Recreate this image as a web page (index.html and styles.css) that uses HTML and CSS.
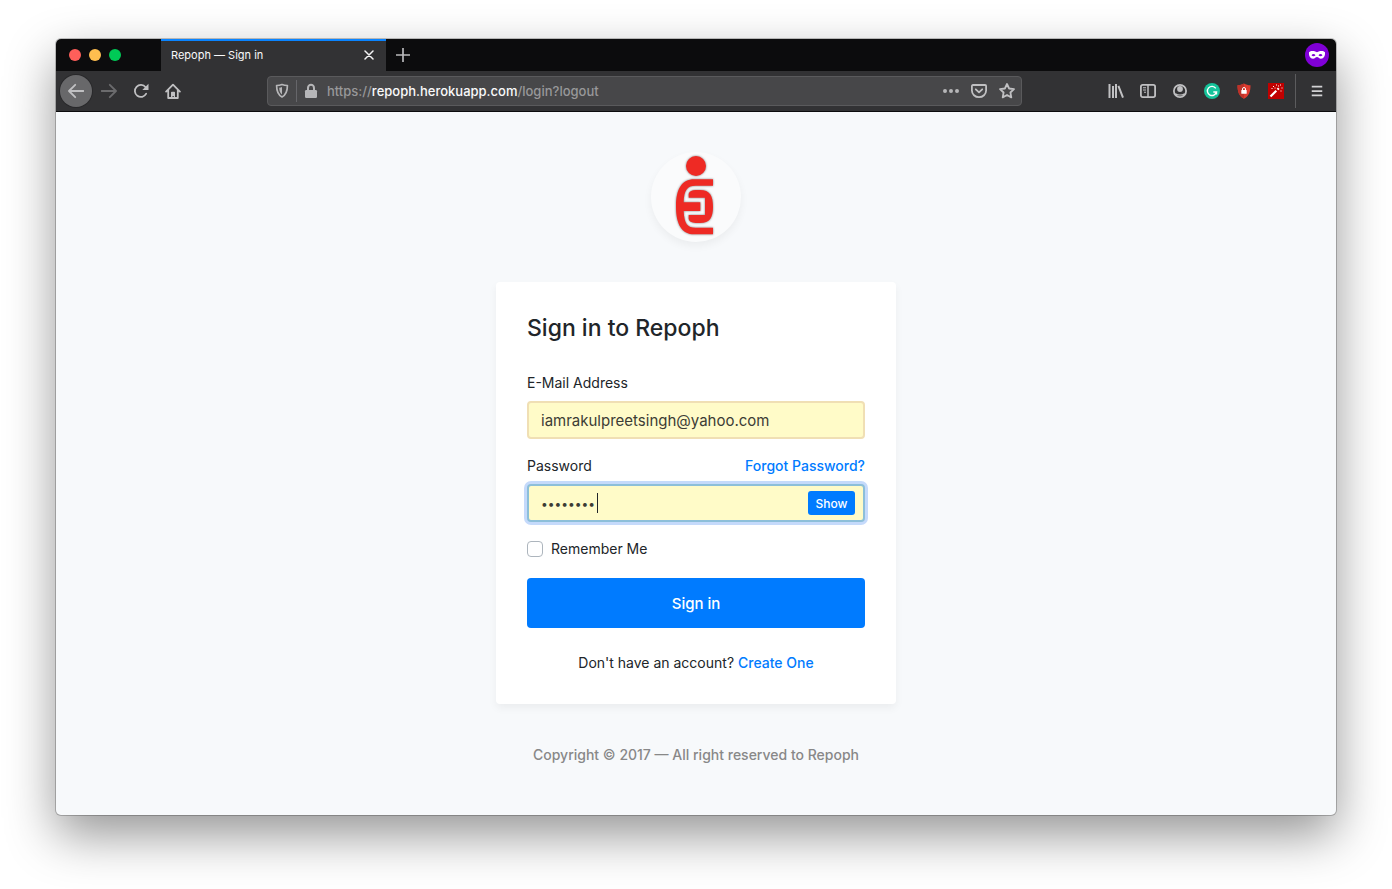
FILE: index.html
```
<!DOCTYPE html>
<html lang="en">
<head>
<meta charset="utf-8">
<title>Repoph — Sign in</title>
<link rel="stylesheet" href="styles.css">
</head>
<body>
<div class="window">
  <header class="tabbar">
    <div class="lights">
      <button class="light close" aria-label="Close window"></button>
      <button class="light minimize" aria-label="Minimize window"></button>
      <button class="light maximize" aria-label="Maximize window"></button>
    </div>
    <div class="tab">
      <span class="tab-title">Repoph — Sign in</span>
      <button class="tab-close" aria-label="Close tab"><svg width="10" height="10" viewBox="0 0 10 10"><path d="M1 1l8 8M9 1L1 9" stroke="#f4f4f5" stroke-width="1.5" stroke-linecap="round"/></svg></button>
    </div>
    <button class="new-tab" aria-label="New tab"><svg width="14" height="14" viewBox="0 0 14 14"><path d="M7 0v14M0 7h14" stroke="#b9b9bb" stroke-width="1.7"/></svg></button>
    <svg class="private" width="24" height="24" viewBox="0 0 24 24"><circle cx="12" cy="12" r="12" fill="#8000d7"/><path d="M4 9.2C6 7.300 9.500 8 12 9.200c2.500-1.200 6-1.900 8 0 .4 3.500-1.200 6.500-4 6.500-2 0-2.700-1.700-4-1.700s-2 1.700-4 1.700c-2.800 0-4.400-3-4-6.500z" fill="#fff"/><path d="M6.500 12.200c1-1.600 3-1.600 4 0-1 1.300-3 1.300-4 0zm7 0c1-1.600 3-1.600 4 0-1 1.300-3 1.300-4 0z" fill="#8000d7"/></svg>
  </header>

  <nav class="toolbar">
    <button class="tool back" aria-label="Back"><svg class="icon" viewBox="0 0 16 16"><path d="M15.500 8H1.200M7.200 1.800L1 8l6.200 6.200" stroke-linecap="round" stroke-linejoin="round"/></svg></button>
    <button class="tool forward" aria-label="Forward"><svg class="icon" viewBox="0 0 16 16"><path d="M.5 8h14.300M8.800 1.800L15 8l-6.200 6.200" stroke-linecap="round" stroke-linejoin="round"/></svg></button>
    <button class="tool" aria-label="Reload"><svg class="icon" viewBox="0 0 16 16"><path d="M13.200 10.700A6 6 0 1 1 12.600 4.200" stroke-linecap="round"/><path d="M15.500 .8v6.200H9.300z" class="solid"/></svg></button>
    <button class="tool" aria-label="Home"><svg class="icon" viewBox="0 0 16 16"><path d="M1.100 8.600L8 1.600l6.900 7M3.200 7v8h9.600V7" stroke-linecap="round" stroke-linejoin="round"/><path d="M6 15V9.500Q6 8.700 6.800 8.700h2.400q.8 0 .8.800V15H8.800v-2H7.500v2z" class="solid"/></svg></button>
    <div class="spacer"></div>
    <div class="urlbar">
      <button class="mini shield" aria-label="Tracking protection"><svg width="14" height="16" viewBox="0 0 14 16"><path d="M7 1.500c2 .8 3.500 1 5.400 1 0 6-1.300 9.300-5.400 11.500C2.900 11.800 1.600 8.500 1.600 2.500c1.900 0 3.400-.2 5.400-1z" fill="none" stroke="#b6b6b8" stroke-width="1.700" stroke-linejoin="round"/><path d="M7 4v7.500C5 10 4.300 8 4.200 4.700 5.400 4.600 6.200 4.400 7 4z" fill="#b6b6b8"/></svg></button>
      <button class="mini lock" aria-label="Site information"><svg width="14" height="16" viewBox="0 0 14 16"><path d="M4 8V5a3 3.200 0 0 1 6 0v3" fill="none" stroke="#b6b6b8" stroke-width="2"/><rect x="1" y="7" width="12" height="8" rx="1.200" fill="#b6b6b8"/></svg></button>
      <div class="address" role="textbox" aria-label="Address" contenteditable="true" spellcheck="false">https://<span class="host">repoph.herokuapp.com</span>/login?logout</div>
      <div class="page-actions">
        <button class="mini" aria-label="Page actions"><svg width="16" height="16" viewBox="0 0 16 16"><path d="M2 6a2 2 0 1 1 0 4 2 2 0 0 1 0-4zm6 0a2 2 0 1 1 0 4 2 2 0 0 1 0-4zm6 0a2 2 0 1 1 0 4 2 2 0 0 1 0-4z" fill="#b6b6b8"/></svg></button>
        <button class="mini" aria-label="Save to Pocket"><svg class="icon" viewBox="0 0 16 16"><path d="M2 2h12q1.100 0 1.100 1.100V7.500a7.100 6.700 0 0 1-14.200 0V3.100Q.9 2 2 2zM4.800 6.300L8 9.400l3.200-3.100" stroke-linecap="round" stroke-linejoin="round"/></svg></button>
        <button class="mini" aria-label="Bookmark page"><svg class="icon" viewBox="0 0 16 16"><path d="M8 1l2.100 4.500 4.900.6-3.600 3.400.9 4.900L8 12l-4.300 2.400.9-4.900L1 6.100l4.900-.6z" stroke-linejoin="round"/></svg></button>
      </div>
    </div>
    <div class="spacer"></div>
    <button class="tool" aria-label="Library"><svg class="icon" viewBox="0 0 16 16"><path d="M1.500 1v14M5 3v12M8 1v14M10.400 2.800L15 14.600" stroke-width="2"/></svg></button>
    <button class="tool" aria-label="Sidebars"><svg class="icon" viewBox="0 0 16 16"><rect x=".9" y="1.900" width="14.200" height="12.200" rx="1.800"/><path d="M8 2v12" stroke-width="1.500"/><path d="M3 4.700h3M3 7h3M4 9.300h2" stroke-width="1.100"/></svg></button>
    <button class="tool" aria-label="Account"><svg class="icon" viewBox="0 0 16 16"><circle cx="8" cy="8" r="6.100"/><circle cx="8" cy="6" r="2.900" class="solid"/><path d="M3.300 10q4.700 3 9.400 0l-.7 2.500H4z" class="solid"/></svg></button>
    <button class="tool" aria-label="Grammarly"><svg width="16" height="16" viewBox="0 0 16 16"><circle cx="8" cy="8" r="8" fill="#15c39a"/><path d="M11.800 5.300A4.600 4.600 0 1 0 12.500 9H9.300M12.500 8.400v3" fill="none" stroke="#fff" stroke-width="1.400"/></svg></button>
    <button class="tool" aria-label="Password shield"><svg width="16" height="16" viewBox="0 0 16 16"><path d="M8 .5c2 1.400 4 1.700 6.500 1.700C14.500 9 13 13 8 15.700 3 13 1.500 9 1.500 2.200 4 2.200 6 1.900 8 .5z" fill="#de3b2f"/><path d="M8 .5v15.200C3 13 1.500 9 1.500 2.200 4 2.200 6 1.900 8 .5z" fill="#bd3229"/><path d="M6.500 7.500V6a1.500 1.500 0 0 1 3 0v1.500" fill="none" stroke="#fff"/><rect x="5.300" y="7" width="5.400" height="3.800" rx=".5" fill="#fff"/></svg></button>
    <button class="tool" aria-label="Magic wand"><svg width="16" height="16" viewBox="0 0 16 16"><path fill="#c00000" d="M0 0h16v16H0z"/><path d="M2.500 13.500L8.300 7.700M9.500 6.500l1.300-1.300" stroke="#fff" stroke-width="2.200"/><path d="M5 3.500h1M8 2h1M12 2h1M13.500 5h1M12.500 8h1M3.500 5.500h1M10 3h1M6.500 5h1" stroke="#fff"/></svg></button>
    <span class="divider"></span>
    <button class="tool" aria-label="Menu"><svg class="icon menu" viewBox="0 0 16 16"><path d="M2 3h12M2 8h12M2 13h12" stroke-width="2"/></svg></button>
  </nav>

  <main class="page">
    <div class="brand">
      <svg class="logo" viewBox="63 36 270 270" role="img" aria-label="Repoph logo"><g fill="#ee2a24"><circle cx="198" cy="78" r="30"/><path d="M249 118H193C155 118 138 148 138 200S155 283 193 283H249V263H197C172 263 163 252 161 213H211V187H161C162 150 172 137 197 137H249Z"/><path d="M176 173V161Q180 150 197 150H210C240 150 249 168 249 200S240 249 210 249H197Q177 248 176 237V225H225V173Z"/></g></svg>
    </div>
    <section class="card">
      <h1 class="title">Sign in to Repoph</h1>
      <form class="form">
        <div class="group">
          <label for="email">E-Mail Address</label>
          <input class="field" id="email" type="email" value="iamrakulpreetsingh@yahoo.com">
        </div>
        <div class="group">
          <div class="label-row">
            <label for="password">Password</label>
            <a class="link" href="#forgot">Forgot Password?</a>
          </div>
          <div class="password">
            <input class="field active" id="password" type="password" value="password">
            <span class="caret"></span>
            <button class="show" type="button">Show</button>
          </div>
        </div>
        <div class="remember">
          <input class="check" id="remember" type="checkbox">
          <label for="remember">Remember Me</label>
        </div>
        <button class="submit" type="button">Sign in</button>
        <p class="signup">Don't have an account? <a class="link" href="#register">Create One</a></p>
      </form>
    </section>
    <footer class="footer">Copyright © 2017 — All right reserved to Repoph</footer>
  </main>
</div>
</body>
</html>
```

FILE: styles.css
```
* { box-sizing: border-box; }
body {
  margin: 0;
  min-height: 100vh;
  padding: 39px 56px 74px;
  display: flex;
  background: #fff;
  color: #212529;
  font: 14px/21px Inter, "Liberation Sans", sans-serif;
}
button {
  padding: 0;
  border: 0;
  background: none;
  font: inherit;
}
svg { display: block; }

.window {
  flex: 1;
  min-width: 0;
  display: flex;
  flex-direction: column;
  border-radius: 5px;
  overflow: hidden;
  background: #f7f9fb;
  box-shadow: 0 0 0 1px rgba(0, 0, 0, .22), 0 20px 50px rgba(0, 0, 0, .42);
}

/* Tab bar */
.tabbar {
  height: 32px;
  display: flex;
  align-items: center;
  background: #0c0c0d;
}
.lights {
  width: 105px;
  padding-left: 13px;
  display: flex;
  gap: 8px;
}
.light {
  width: 12px;
  height: 12px;
  border-radius: 50%;
}
.close { background: #ff5f5a; }
.minimize { background: #ffbe4f; }
.maximize { background: #00ca56; }
.tab {
  width: 225px;
  align-self: stretch;
  padding: 0 12px 0 10px;
  display: flex;
  align-items: center;
  justify-content: space-between;
  background: #323234;
  box-shadow: inset 0 2px #0a84ff;
  color: #f9f9fa;
  font-size: 11px;
}
.new-tab { margin-left: 10px; }
.private { margin: 0 7px 0 auto; }

/* Toolbar */
.toolbar {
  height: 41px;
  padding: 0 3px 0 4px;
  display: flex;
  align-items: center;
  background: #323234;
  border-bottom: 1px solid #0c0c0d;
}
.tool {
  width: 32px;
  height: 32px;
  display: grid;
  place-items: center;
  flex: none;
}
.back {
  border-radius: 50%;
  background: #68686a;
  box-shadow: 0 0 0 1px #29292b;
}
.forward { margin-left: 1px; }
.forward .icon { opacity: .4; }
.icon {
  width: 16px;
  height: 16px;
  fill: none;
  stroke: #c0c0c2;
  stroke-width: 1.8;
}
.icon .solid { fill: #c0c0c2; stroke: none; }
.menu { width: 14px; stroke: #d2d2d4; }
.spacer { flex: 79; }
.urlbar {
  flex: 750;
  height: 30px;
  padding: 0 6px 0 7px;
  display: flex;
  align-items: center;
  background: #474749;
  border: 1px solid #5a5a5c;
  border-radius: 4px;
}
.mini { display: grid; place-items: center; }
.shield {
  height: 22px;
  padding-right: 7px;
  border-right: 1px solid #66666a;
}
.lock { padding: 0 9px 0 7px; }
.address {
  flex: 1;
  color: #98989a;
  font-size: 13px;
  font-weight: 500;
  white-space: nowrap;
}
.host { color: #f9f9fa; }
.page-actions { display: flex; gap: 12px; }
.divider {
  width: 1px;
  height: 34px;
  margin: 0 5px 0 3px;
  background: #5c5c5e;
}

/* Page */
.page {
  flex: 1;
  padding: 40px 16px;
  display: flex;
  flex-direction: column;
  align-items: center;
}
.brand {
  width: 90px;
  height: 90px;
  margin-bottom: 40px;
  border-radius: 50%;
  background: #fafbfc;
  box-shadow: 0 4px 8px rgba(0, 0, 0, .05);
}
.logo { filter: drop-shadow(0 0 1px rgba(0, 0, 0, .5)); }
.card {
  width: 100%;
  max-width: 400px;
  padding: 31px;
  background: #fff;
  border-radius: 4px;
  box-shadow: 0 4px 8px rgba(0, 0, 0, .05);
}
.title {
  margin: 0 0 28px;
  font-size: 23px;
  line-height: 31px;
  font-weight: 500;
}
.group {
  display: flex;
  flex-direction: column;
  gap: 8px;
  margin-bottom: 16px;
}
.label-row { display: flex; justify-content: space-between; }
.link {
  color: #007bff;
  font-weight: 500;
  text-decoration: none;
}
.field {
  width: 100%;
  height: 38px;
  padding: 0 12px;
  border: 2px solid #f0dfb4;
  border-radius: 4px;
  background: #fffbc8;
  color: #3c3c35;
  font: 15px Inter, "Liberation Sans", sans-serif;
}
.password { position: relative; }
.field.active {
  display: block;
  border-color: #8dbfd9;
  box-shadow: 0 0 0 3px #c5dafb;
  font-size: 12px;
}
.caret {
  position: absolute;
  left: 70px;
  top: 9px;
  width: 1px;
  height: 20px;
  background: #212529;
}
.show {
  position: absolute;
  right: 10px;
  top: 7px;
  width: 47px;
  height: 24px;
  border-radius: 3px;
  background: #007bff;
  color: #fff;
  font-size: 12px;
  font-weight: 500;
}
.remember {
  display: flex;
  align-items: center;
  gap: 8px;
  margin-bottom: 19px;
}
.check {
  appearance: none;
  width: 16px;
  height: 16px;
  margin: 0;
  border: 1px solid #adb5bd;
  border-radius: 4px;
  background: #fff;
}
.submit {
  width: 100%;
  height: 50px;
  border-radius: 4px;
  background: #007bff;
  color: #fff;
  font-size: 15px;
  font-weight: 500;
}
.signup { margin: 24px 0 0; text-align: center; }
.footer {
  margin-top: 40px;
  color: #888;
  font-weight: 500;
  text-align: center;
}
```
